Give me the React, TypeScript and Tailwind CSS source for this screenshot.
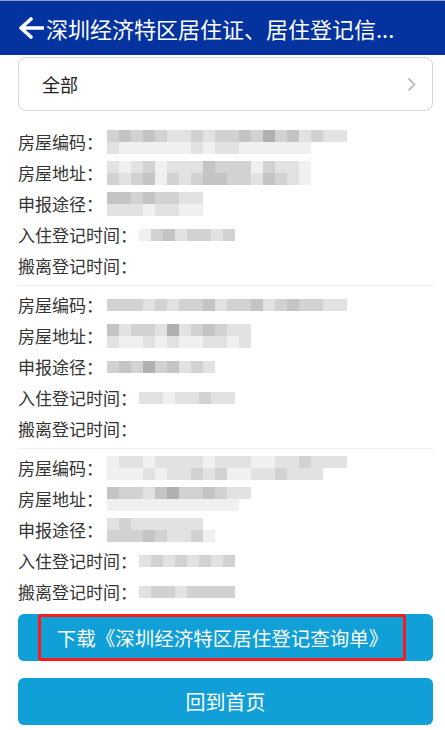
import React from 'react';

type Shade = string;

// pixelated placeholders for the masked values
const G = 'bg-[#c4c4c4]';
const M = 'bg-[#d2d2d2]';
const L = 'bg-[#e2e2e2]';
const W = 'bg-[#f0f0f0]';
const D = 'bg-[#b0b0b0]';
const T = 'bg-transparent';

interface Blur {
  offset: number;
  rows: Shade[][];
}

interface Record {
  code: Blur;
  addr: Blur;
  via: Blur;
  inTime: Blur | null;
  outTime: Blur | null;
}

const records: Record[] = [
  {
    code: { offset: 4, rows: [[M, G, M, G, M, L, L, M, L, M, M, G, M, D, M, G, L, M, L, L], [L, W, W, W, W, W, W, L, W, L, L, W, W, W, W, W, W, T, T, T]] },
    addr: { offset: 4, rows: [[L, W, L, M, W, L, L, L, G, M, M, M, W, M, L, L, W, T], [M, L, M, G, W, M, L, M, G, G, M, M, L, G, M, L, W, T]] },
    via: { offset: 4, rows: [[G, G, M, G, M, M, L, L], [L, L, L, W, L, L, W, W]] },
    inTime: { offset: 2, rows: [[W, M, G, L, M, M, L, M]] },
    outTime: null,
  },
  {
    code: { offset: 4, rows: [[M, M, M, L, M, L, M, M, G, L, M, M, G, L, M, G, M, M, L, L]] },
    addr: { offset: 4, rows: [[G, L, M, M, L, D, L, M, G, M, L, L], [L, W, W, L, W, L, W, W, L, L, W, L]] },
    via: { offset: 4, rows: [[M, G, M, D, M, G, L, M, L]] },
    inTime: { offset: 2, rows: [[L, L, W, L, L, M, L, L]] },
    outTime: null,
  },
  {
    code: { offset: 4, rows: [[W, L, L, W, L, L, L, L, W, L, L, L, W, W, L, L, M, L, L, L], [W, W, W, L, W, L, L, M, L, M, W, W, L, L, M, L, L, L, T, T]] },
    addr: { offset: 4, rows: [[G, M, M, L, G, D, M, M, G, M, L, L], [W, W, W, W, W, W, W, W, W, W, W, T]] },
    via: { offset: 4, rows: [[L, M, L, L, L, L, L, L, T], [M, M, M, G, M, L, L, M, W]] },
    inTime: { offset: 2, rows: [[L, M, L, M, L, M, L, M]] },
    outTime: { offset: 2, rows: [[L, M, M, L, M, M, M, M]] },
  },
];

const Pixels: React.FC<{ blur: Blur }> = ({ blur }) => (
  <div className="flex flex-col blur-[0.6px]" style={{ marginLeft: blur.offset }}>
    {blur.rows.map((row, i) => (
      <div key={i} className="flex">
        {row.map((c, j) => (
          <div key={j} className={`w-3 h-[12px] ${c}`} />
        ))}
      </div>
    ))}
  </div>
);

const Row: React.FC<{ label: string; value: Blur | null }> = ({ label, value }) => (
  <div className="flex items-center h-[31px]">
    <span className="text-[17px] text-[#333] whitespace-nowrap">{label}</span>
    {value && <Pixels blur={value} />}
  </div>
);

export default function App() {
  return (
    <div className="w-[445px] h-[730px] bg-white overflow-hidden" style={{ fontFamily: '"Noto Sans CJK SC", "Noto Sans", sans-serif' }}>
      {/* Header */}
      <div className="h-[55px] bg-[#0433a0] border-t border-[#8e9cc9] flex items-center pl-[18px]">
        <svg width="26" height="22" viewBox="0 0 26 22" className="shrink-0">
          <path d="M3 11H26M13 2L3 11L13 20" fill="none" stroke="white" strokeWidth="3.6" strokeLinecap="round" strokeLinejoin="round" />
        </svg>
        <span className="ml-[2px] text-white text-[22px] whitespace-nowrap">深圳经济特区居住证、居住登记信...</span>
      </div>

      <div className="pl-[18px] pr-[12px]">
        {/* Filter card */}
        <div className="mt-[2px] h-[54px] rounded-[8px] border border-[#d6d6d6] flex items-center justify-between pl-[23px] pr-[16px]">
          <span className="text-[18px] text-[#222]">全部</span>
          <svg width="9" height="15" viewBox="0 0 9 15">
            <path d="M1.5 1.5L7.5 7.5L1.5 13.5" fill="none" stroke="#bdbdbd" strokeWidth="1.8" />
          </svg>
        </div>

        {/* Records */}
        <div className="mt-[15px]">
          {records.map((r, i) => (
            <div key={i} className={i < records.length - 1 ? 'pb-[4px] mb-[3px] border-b border-[#efefef]' : ''}>
              <Row label="房屋编码：" value={r.code} />
              <Row label="房屋地址：" value={r.addr} />
              <Row label="申报途径：" value={r.via} />
              <Row label="入住登记时间：" value={r.inTime} />
              <Row label="搬离登记时间：" value={r.outTime} />
            </div>
          ))}
        </div>

        {/* Actions */}
        <div className="mt-[7px] flex flex-col gap-[17px]">
          <button className="relative h-[47px] rounded-[6px] bg-[#109fd6] text-white text-[19.5px] flex items-center justify-center">
            <span className="absolute left-[20px] right-[27px] top-0 bottom-0 border-[3px] border-[#ff1a1a] rounded-[3px]" />
            <span className="relative -ml-[6px]">下载《深圳经济特区居住登记查询单》</span>
          </button>
          <button className="h-[47px] rounded-[6px] bg-[#109fd6] text-white text-[20px] flex items-center justify-center">
            回到首页
          </button>
        </div>
      </div>
    </div>
  );
}
